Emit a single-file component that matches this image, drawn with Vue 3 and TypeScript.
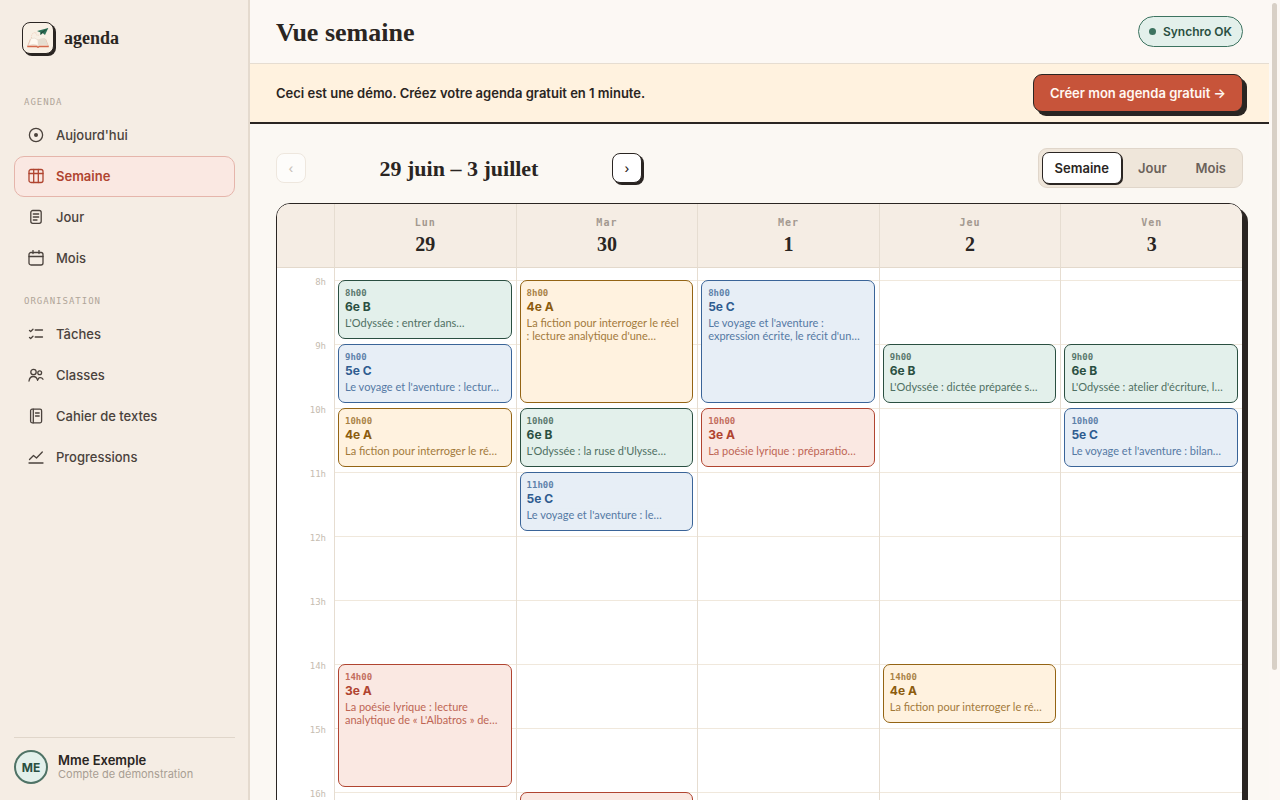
<script setup lang="ts">
import { ref } from 'vue'

type Tone = 'green' | 'blue' | 'amber' | 'red'

interface Lesson {
  start: number
  hours: number
  group: string
  tone: Tone
  lines: string[]
}

interface Day {
  name: string
  date: number
  lessons: Lesson[]
}

interface NavItem {
  label: string
  icon: string
}

const sections: { title: string; items: NavItem[] }[] = [
  {
    title: 'AGENDA',
    items: [
      { label: "Aujourd'hui", icon: 'today' },
      { label: 'Semaine', icon: 'week' },
      { label: 'Jour', icon: 'day' },
      { label: 'Mois', icon: 'month' },
    ],
  },
  {
    title: 'ORGANISATION',
    items: [
      { label: 'Tâches', icon: 'tasks' },
      { label: 'Classes', icon: 'classes' },
      { label: 'Cahier de textes', icon: 'notebook' },
      { label: 'Progressions', icon: 'progress' },
    ],
  },
]

const views = ['Semaine', 'Jour', 'Mois']
const activeView = ref('Semaine')

const firstHour = 8
const hours = Array.from({ length: 10 }, (_, i) => firstHour + i)

const tones: Record<string, Tone> = { '6e B': 'green', '5e C': 'blue', '4e A': 'amber', '3e A': 'red' }

function lesson(start: number, span: number, group: string, ...lines: string[]): Lesson {
  return { start, hours: span, group, tone: tones[group], lines }
}

const days: Day[] = [
  {
    name: 'Lun',
    date: 29,
    lessons: [
      lesson(8, 1, '6e B', "L'Odyssée : entrer dans…"),
      lesson(9, 1, '5e C', "Le voyage et l'aventure : lectur…"),
      lesson(10, 1, '4e A', 'La fiction pour interroger le ré…'),
      lesson(14, 2, '3e A', 'La poésie lyrique : lecture', "analytique de « L'Albatros » de…"),
    ],
  },
  {
    name: 'Mar',
    date: 30,
    lessons: [
      lesson(8, 2, '4e A', 'La fiction pour interroger le réel', ": lecture analytique d'une…"),
      lesson(10, 1, '6e B', "L'Odyssée : la ruse d'Ulysse…"),
      lesson(11, 1, '5e C', "Le voyage et l'aventure : le…"),
      lesson(16, 1, '3e A', 'La poésie lyrique'),
    ],
  },
  {
    name: 'Mer',
    date: 1,
    lessons: [
      lesson(8, 2, '5e C', "Le voyage et l'aventure :", "expression écrite, le récit d'un…"),
      lesson(10, 1, '3e A', 'La poésie lyrique : préparatio…'),
    ],
  },
  {
    name: 'Jeu',
    date: 2,
    lessons: [
      lesson(9, 1, '6e B', "L'Odyssée : dictée préparée s…"),
      lesson(14, 1, '4e A', 'La fiction pour interroger le ré…'),
    ],
  },
  {
    name: 'Ven',
    date: 3,
    lessons: [
      lesson(9, 1, '6e B', "L'Odyssée : atelier d'écriture, l…"),
      lesson(10, 1, '5e C', "Le voyage et l'aventure : bilan…"),
    ],
  },
]

function rowOf(l: Lesson) {
  return { gridRow: `${l.start - firstHour + 1} / span ${l.hours}` }
}
</script>

<template>
  <div class="app">
    <aside class="sidebar">
      <a class="brand" href="#">
        <span class="brand-mark">
          <svg viewBox="0 0 30 30" width="30" height="30" aria-hidden="true">
            <path d="M7.500 16 L4.500 23.500 H13.500 L15 24.500 L16.500 23.500 H25.500 L22.500 16" fill="#f3e3d6" stroke="#e0a48e" stroke-width=".6" />
            <path d="M8 15.500 Q12 14 15 17 L15.300 22.500 Q10 20.500 5.500 22.500 Z" fill="#fffaf2" stroke="#dccfc0" stroke-width=".5" />
            <path d="M15 17 Q18 14.500 22 15 L25 22.500 Q20 20.500 15.300 22.500 Z" fill="#e5ddd0" />
            <path d="M4.300 23.500 H13.500 L15 24.300 L16.500 23.500 H25.700" fill="none" stroke="#d5694c" stroke-width="1.300" />
            <path d="M8.500 15 Q8 9.500 13 9.500 Q12 13 17 12" fill="none" stroke="#e6b7a0" stroke-width=".6" stroke-dasharray="1 1" />
            <path d="M14 8 L25.300 5 L22 12 L19.500 10 L17.500 12 L17.500 9.500 Z" fill="#2f7259" />
            <path d="M25.300 5 L17.500 9.500 L17.500 12 Z" fill="#1f4f3e" />
          </svg>
        </span>
        <span class="brand-name">agenda</span>
      </a>

      <nav class="nav" aria-label="Navigation principale">
        <section v-for="section in sections" :key="section.title" class="nav-section">
          <h2 class="nav-title">{{ section.title }}</h2>
          <a
            v-for="item in section.items"
            :key="item.label"
            href="#"
            class="nav-item"
            :class="{ active: item.label === 'Semaine' }"
          >
            <svg class="nav-icon" viewBox="0 0 16 16" width="16" height="16" aria-hidden="true">
              <template v-if="item.icon === 'today'">
                <circle cx="8" cy="8" r="6.600" />
                <circle class="solid" cx="8" cy="8" r="2" />
              </template>
              <template v-else-if="item.icon === 'week'">
                <rect x="1" y="1.500" width="14" height="13" rx="2" />
                <path d="M1 5.500H15M5.700 1.500V14.500M10.300 1.500V14.500" />
              </template>
              <template v-else-if="item.icon === 'day'">
                <rect x="2.800" y="1.500" width="10.400" height="12.800" rx="2" />
                <path d="M5.300 5H10.700M5.300 8H10.700M5.300 11H9" />
              </template>
              <template v-else-if="item.icon === 'month'">
                <rect x="1" y="2.500" width="14" height="12.500" rx="2" />
                <path d="M1 6.500H15M5 .5V3.500M11 .5V3.500" />
              </template>
              <template v-else-if="item.icon === 'tasks'">
                <path d="M1.500 4.500L2.700 5.500L5 3.200M1.500 11.500L2.700 12.500L5 10.200M7.200 4H14.500M7.200 11H14.500" />
              </template>
              <template v-else-if="item.icon === 'classes'">
                <circle cx="5.500" cy="5" r="2.700" />
                <circle cx="11.700" cy="5.800" r="1.900" />
                <path d="M1 14C1.500 11 3 9.500 5.200 9.500S9 11 9.600 13.300L11 10.800C12.500 10.500 14.300 11 15 12.300" />
              </template>
              <template v-else-if="item.icon === 'notebook'">
                <rect x="2.600" y="1.200" width="11" height="13.600" rx="1.500" />
                <path d="M5.300 1.200V14.800M7.500 5H11.200M7.500 8H11.200" />
              </template>
              <template v-else>
                <path d="M1.500 10.500L5.500 6.500L8.500 9L14.300 3M1 14H15" />
              </template>
            </svg>
            <span>{{ item.label }}</span>
          </a>
        </section>
      </nav>

      <footer class="account">
        <span class="avatar">ME</span>
        <span class="account-text">
          <strong>Mme Exemple</strong>
          <small>Compte de démonstration</small>
        </span>
      </footer>
    </aside>

    <main class="main">
      <header class="topbar">
        <h1>Vue semaine</h1>
        <span class="sync"><i class="sync-dot"></i>Synchro OK</span>
      </header>

      <div class="banner">
        <p>Ceci est une démo. Créez votre agenda gratuit en 1 minute.</p>
        <button type="button" class="cta">Créer mon agenda gratuit →</button>
      </div>

      <div class="content">
        <div class="toolbar">
          <div class="period">
            <button type="button" class="step" disabled aria-label="Semaine précédente">‹</button>
            <h2>29 juin – 3 juillet</h2>
            <button type="button" class="step" aria-label="Semaine suivante">›</button>
          </div>
          <div class="switch">
            <button
              v-for="view in views"
              :key="view"
              type="button"
              :class="{ on: activeView === view }"
              @click="activeView = view"
            >
              {{ view }}
            </button>
          </div>
        </div>

        <div class="calendar">
          <div class="corner"></div>
          <div v-for="day in days" :key="day.name" class="day-head">
            <span class="day-name">{{ day.name }}</span>
            <span class="day-date">{{ day.date }}</span>
          </div>
          <div class="gutter">
            <span v-for="h in hours" :key="h">{{ h }}h</span>
          </div>
          <div v-for="day in days" :key="day.date" class="day-column">
            <article
              v-for="l in day.lessons"
              :key="l.start"
              class="lesson"
              :class="l.tone"
              :style="rowOf(l)"
            >
              <time>{{ l.start }}h00</time>
              <h3>{{ l.group }}</h3>
              <p v-for="line in l.lines" :key="line">{{ line }}</p>
            </article>
          </div>
        </div>
      </div>
    </main>

    <div class="scroll-track"><div class="scroll-thumb"></div></div>
  </div>
</template>

<style>
body {
  margin: 0;
  background: #fcf8f4;
}
</style>

<style scoped>
.app {
  --ink: #2a2522;
  --line: #e6ddd1;
  --serif: "Liberation Serif", serif;
  --mono: "DejaVu Sans Mono", monospace;
  display: grid;
  grid-template-columns: 250px minmax(0, 1fr) 11px;
  height: 100vh;
  overflow: hidden;
  color: var(--ink);
  font-family: Inter, sans-serif;
  font-size: 13px;
}

.app *,
.app *::before {
  box-sizing: border-box;
}

h1,
h2,
h3,
p {
  margin: 0;
}

a {
  color: inherit;
  text-decoration: none;
}

button {
  padding: 0;
  font-family: inherit;
  color: inherit;
  cursor: pointer;
}

.sidebar {
  display: flex;
  flex-direction: column;
  padding: 22px 13px 16px 14px;
  border-right: 2px solid #e4dace;
  background: #f5ede4;
}

.brand {
  display: flex;
  align-items: center;
  gap: 10px;
  padding-left: 8px;
}

.brand-mark {
  display: flex;
  width: 32px;
  height: 32px;
  border: 1px solid var(--ink);
  border-radius: 8px;
  background: #f8f0e5;
  box-shadow: 2px 2px 0 var(--ink);
}

.brand-name {
  font: 700 18px/24px var(--serif);
}

.nav {
  flex: 1;
  padding-top: 41px;
}

.nav-section + .nav-section {
  margin-top: 15px;
}

.nav-title {
  margin-bottom: 6px;
  padding-left: 10px;
  color: #b0a599;
  font: 400 9px/14px var(--mono);
  letter-spacing: 1px;
}

.nav-item {
  display: flex;
  align-items: center;
  gap: 12px;
  height: 41px;
  padding: 0 13px 1px;
  border: 1px solid transparent;
  border-radius: 10px;
  color: #4a423c;
  font-weight: 500;
}

.nav-item.active {
  border-color: #e5b5ab;
  background: #fae8e2;
  color: #b04430;
  font-weight: 600;
}

.nav-icon {
  fill: none;
  stroke: currentColor;
  stroke-width: 1.3;
  stroke-linecap: round;
  stroke-linejoin: round;
}

.nav-icon .solid {
  fill: currentColor;
  stroke: none;
}

.account {
  display: flex;
  align-items: center;
  gap: 10px;
  padding-top: 12px;
  border-top: 1px solid #e0d6ca;
}

.avatar {
  display: grid;
  place-items: center;
  width: 34px;
  height: 34px;
  border: 2px solid #4f7366;
  border-radius: 50%;
  background: #e3f0eb;
  color: #2a4f41;
  font-size: 12px;
  font-weight: 700;
}

.account-text {
  display: flex;
  flex-direction: column;
}

.account-text strong {
  font-size: 13px;
  font-weight: 600;
  line-height: 14px;
}

.account-text small {
  color: #a89e93;
  font-size: 11px;
  line-height: 14px;
}

.main {
  min-width: 0;
  overflow: hidden;
  background: #fbf8f3;
}

.topbar {
  display: flex;
  align-items: center;
  justify-content: space-between;
  height: 64px;
  padding: 0 26px;
  border-bottom: 1px solid var(--line);
  background: #fcf8f4;
}

.topbar h1 {
  padding-top: 2px;
  font: 700 26px/32px var(--serif);
}

.sync {
  display: flex;
  align-items: center;
  gap: 7px;
  height: 31px;
  padding: 0 10px;
  border: 1px solid #3d7360;
  border-radius: 16px;
  background: #e3f0eb;
  color: #2a4f41;
  font-size: 12px;
  font-weight: 600;
}

.sync-dot {
  width: 7px;
  height: 7px;
  border-radius: 50%;
  background: #3d7360;
}

.banner {
  display: flex;
  align-items: center;
  justify-content: space-between;
  height: 60px;
  padding: 0 26px;
  border-bottom: 2px solid var(--ink);
  background: #fff2df;
  font-weight: 600;
}

.cta {
  height: 38px;
  padding: 0 16px;
  border: 1px solid var(--ink);
  border-radius: 9px;
  background: #c7543a;
  box-shadow: 4px 4px 0 var(--ink);
  color: #fff8f2;
  font-size: 13px;
  font-weight: 600;
}

.content {
  padding: 24px 26px;
}

.toolbar {
  display: flex;
  align-items: center;
  justify-content: space-between;
  margin-bottom: 15px;
}

.period {
  display: flex;
  align-items: center;
}

.period h2 {
  width: 306px;
  padding-top: 2px;
  font: 700 22px/30px var(--serif);
  text-align: center;
}

.step {
  width: 30px;
  height: 30px;
  border: 1px solid var(--ink);
  border-radius: 8px;
  background: #fff;
  box-shadow: 2px 2px 0 var(--ink);
  font-size: 12px;
  font-weight: 500;
}

.step:disabled {
  border-color: #e6ddd1;
  box-shadow: none;
  color: #a89e93;
  opacity: 0.6;
}

.switch {
  display: flex;
  align-items: center;
  gap: 3px;
  height: 40px;
  padding: 3px;
  border: 1px solid #e0d6ca;
  border-radius: 9px;
  background: #efe6da;
}

.switch button {
  height: 32px;
  padding: 0 12px;
  border: 1px solid transparent;
  border-radius: 7px;
  background: none;
  color: #6b625a;
  font-size: 13px;
  font-weight: 600;
}

.switch button.on {
  border-color: var(--ink);
  background: #fff;
  box-shadow: 1px 1px 0 var(--ink);
  color: var(--ink);
}

.calendar {
  display: grid;
  grid-template-columns: 57px repeat(5, minmax(0, 1fr));
  overflow: hidden;
  border: 1px solid var(--ink);
  border-radius: 14px;
  background: #fff;
  box-shadow: 5px 5px 0 var(--ink);
}

.corner,
.day-head {
  height: 64px;
  border-bottom: 1px solid #e3d9cc;
  background: #f5ede4;
}

.day-head {
  display: flex;
  flex-direction: column;
  align-items: center;
  padding-top: 12px;
  border-left: 1px solid var(--line);
}

.day-name {
  color: #a39990;
  font: 700 10px/14px var(--mono);
  letter-spacing: 1px;
}

.day-date {
  font: 700 20px/28px var(--serif);
}

.gutter {
  display: grid;
  grid-auto-rows: 64px;
  padding: 8px 8px 0 0;
  color: #c6bcb0;
  font: 400 9px/12px var(--mono);
  text-align: right;
}

.day-column {
  display: grid;
  grid-template-rows: repeat(10, 64px);
  padding: 12px 4px 0 3px;
  border-left: 1px solid var(--line);
  background: linear-gradient(#f0e8dc 1px, transparent 1px) 0 12px / 100% 64px;
}

.lesson {
  min-width: 0;
  margin-bottom: 5px;
  padding: 6px;
  overflow: hidden;
  border: 1px solid;
  border-radius: 7px;
  white-space: nowrap;
}

.lesson time {
  display: block;
  font: 700 9px/12px var(--mono);
  opacity: 0.75;
}

.lesson h3 {
  margin-bottom: 1px;
  font-size: 12px;
  font-weight: 700;
  line-height: 16px;
}

.lesson p {
  font-family: Lato, sans-serif;
  font-size: 11px;
  line-height: 13px;
  opacity: 0.8;
}

.green {
  border-color: #2a4f41;
  background: #e3f0eb;
  color: #2a4f41;
}

.blue {
  border-color: #3a6498;
  background: #e7eef6;
  color: #2f5c90;
}

.amber {
  border-color: #946414;
  background: #fff2df;
  color: #8c5c0e;
}

.red {
  border-color: #b04430;
  background: #fae8e2;
  color: #b04430;
}

.scroll-track {
  padding: 3px;
  background: #fcf8f4;
}

.scroll-thumb {
  width: 5px;
  height: 84%;
  border-radius: 3px;
  background: #d8d0c6;
}
</style>
